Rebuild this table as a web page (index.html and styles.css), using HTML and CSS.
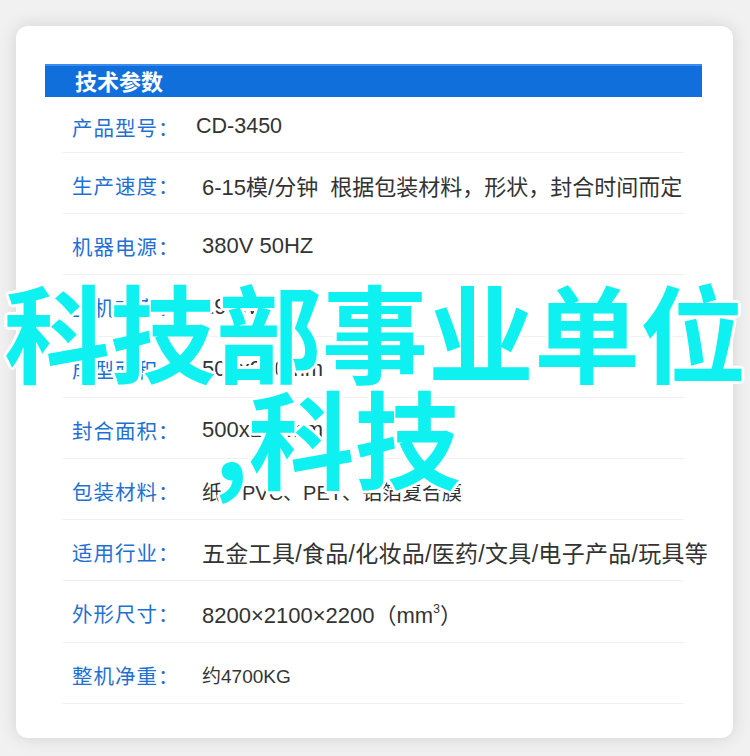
FILE: index.html
```html
<!DOCTYPE html>
<html lang="zh-CN">
<head>
  <meta charset="UTF-8" />
  <meta name="viewport" content="width=device-width, initial-scale=1.0" />
  <title>技术参数</title>
  <link rel="stylesheet" href="styles.css">
</head>
<body>
  <main class="page">
    <section class="spec-card">
      <h2 class="spec-card__title">技术参数</h2>
      <ul class="spec-list">
        <li class="spec-list__row spec-list__row--first">
          <span class="spec-list__label">产品型号：</span>
          <span class="spec-list__value spec-list__value--model">CD-3450</span>
        </li>
        <li class="spec-list__row">
          <span class="spec-list__label">生产速度：</span>
          <span class="spec-list__value">6-15模/分钟&nbsp;&nbsp;根据包装材料，形状，封合时间而定</span>
        </li>
        <li class="spec-list__row">
          <span class="spec-list__label">机器电源：</span>
          <span class="spec-list__value">380V 50HZ</span>
        </li>
        <li class="spec-list__row">
          <span class="spec-list__label">主机功率：</span>
          <span class="spec-list__value">29kW</span>
        </li>
        <li class="spec-list__row">
          <span class="spec-list__label">成型面积：</span>
          <span class="spec-list__value">500x200mm</span>
        </li>
        <li class="spec-list__row">
          <span class="spec-list__label">封合面积：</span>
          <span class="spec-list__value">500x150mm</span>
        </li>
        <li class="spec-list__row">
          <span class="spec-list__label">包装材料：</span>
          <span class="spec-list__value spec-list__value--material">纸、PVC、PET、铝箔复合膜</span>
        </li>
        <li class="spec-list__row">
          <span class="spec-list__label">适用行业：</span>
          <span class="spec-list__value spec-list__value--wide">五金工具/食品/化妆品/医药/文具/电子产品/玩具等</span>
        </li>
        <li class="spec-list__row">
          <span class="spec-list__label">外形尺寸：</span>
          <span class="spec-list__value">8200×2100×2200（mm<sup>3</sup>）</span>
        </li>
        <li class="spec-list__row">
          <span class="spec-list__label">整机净重：</span>
          <span class="spec-list__value spec-list__value--small">约4700KG</span>
        </li>
      </ul>
    </section>

    <!-- overlay caption -->
    <div class="stamp">
      <span class="stamp__line">科技部事业单位</span>
      <span class="stamp__line stamp__line--second">,科技</span>
    </div>
  </main>
</body>
</html>
```

FILE: styles.css
```css
*{
  box-sizing: border-box;
}

body{
  margin: 0;
  background-color: #f1f1f1;
  font-family: "Liberation Sans", "Noto Sans CJK SC", sans-serif;
}

.page{
  position: relative;
  width: 750px;
  height: 756px;
  padding: 26px 17px 18px 16px;
}

.spec-card{
  height: 100%;
  background-color: #fff;
  border-radius: 12px;
  box-shadow: 0 0 18px rgba(0, 0, 0, .13);
  padding: 38px 31px 0 29px;
}

.spec-card__title{
  margin: 0;
  height: 33px;
  padding-left: 30px;
  background-color: #106fdb;
  border-top: 2px solid #3a8cf0;
  color: #fff;
  font-family: "Noto Sans CJK SC", sans-serif;
  font-size: 22px;
  font-weight: 700;
  line-height: 28px;
}

.spec-list{
  list-style: none;
  margin: 0 18px 0 18px;
  padding: 0;
}

.spec-list__row{
  display: flex;
  align-items: center;
  height: 61.2px;
  padding: 4px 0 0 9px;
  border-bottom: 1.5px solid #f0f0f0;
}

.spec-list__row--first{
  height: 56px;
}

.spec-list__label{
  flex: 0 0 130px;
  color: #1f70d3;
  font-family: "Noto Sans CJK SC", sans-serif;
  font-size: 20.5px;
  letter-spacing: 1px;
}

.spec-list__value{
  color: #333;
  font-size: 22px;
  white-space: nowrap;
}

.spec-list__value--model{
  margin-left: -6px;
  font-size: 21.5px;
}

.spec-list__value--material{
  font-size: 20px;
}

.spec-list__value--wide{
  font-size: 23px;
  letter-spacing: .3px;
}

.spec-list__value--small{
  font-size: 19px;
}

.spec-list__value sup{
  font-size: 12px;
  vertical-align: 10px;
  line-height: 0;
}

.stamp{
  position: absolute;
  top: 276px;
  left: 0;
  width: 750px;
  display: flex;
  flex-direction: column;
  color: #0ff0f0;
  font-family: "Noto Sans CJK SC", sans-serif;
  font-size: 106px;
  font-weight: 700;
  line-height: 106px;
  text-shadow: 3px 0 #fff, -3px 0 #fff, 0 3px #fff, 0 -3px #fff,
    2px 2px #fff, -2px -2px #fff, 2px -2px #fff, -2px 2px #fff;
}

.stamp__line{
  white-space: nowrap;
  text-align: center;
}

.stamp__line--second{
  padding-left: 214px;
  text-align: left;
}
```
